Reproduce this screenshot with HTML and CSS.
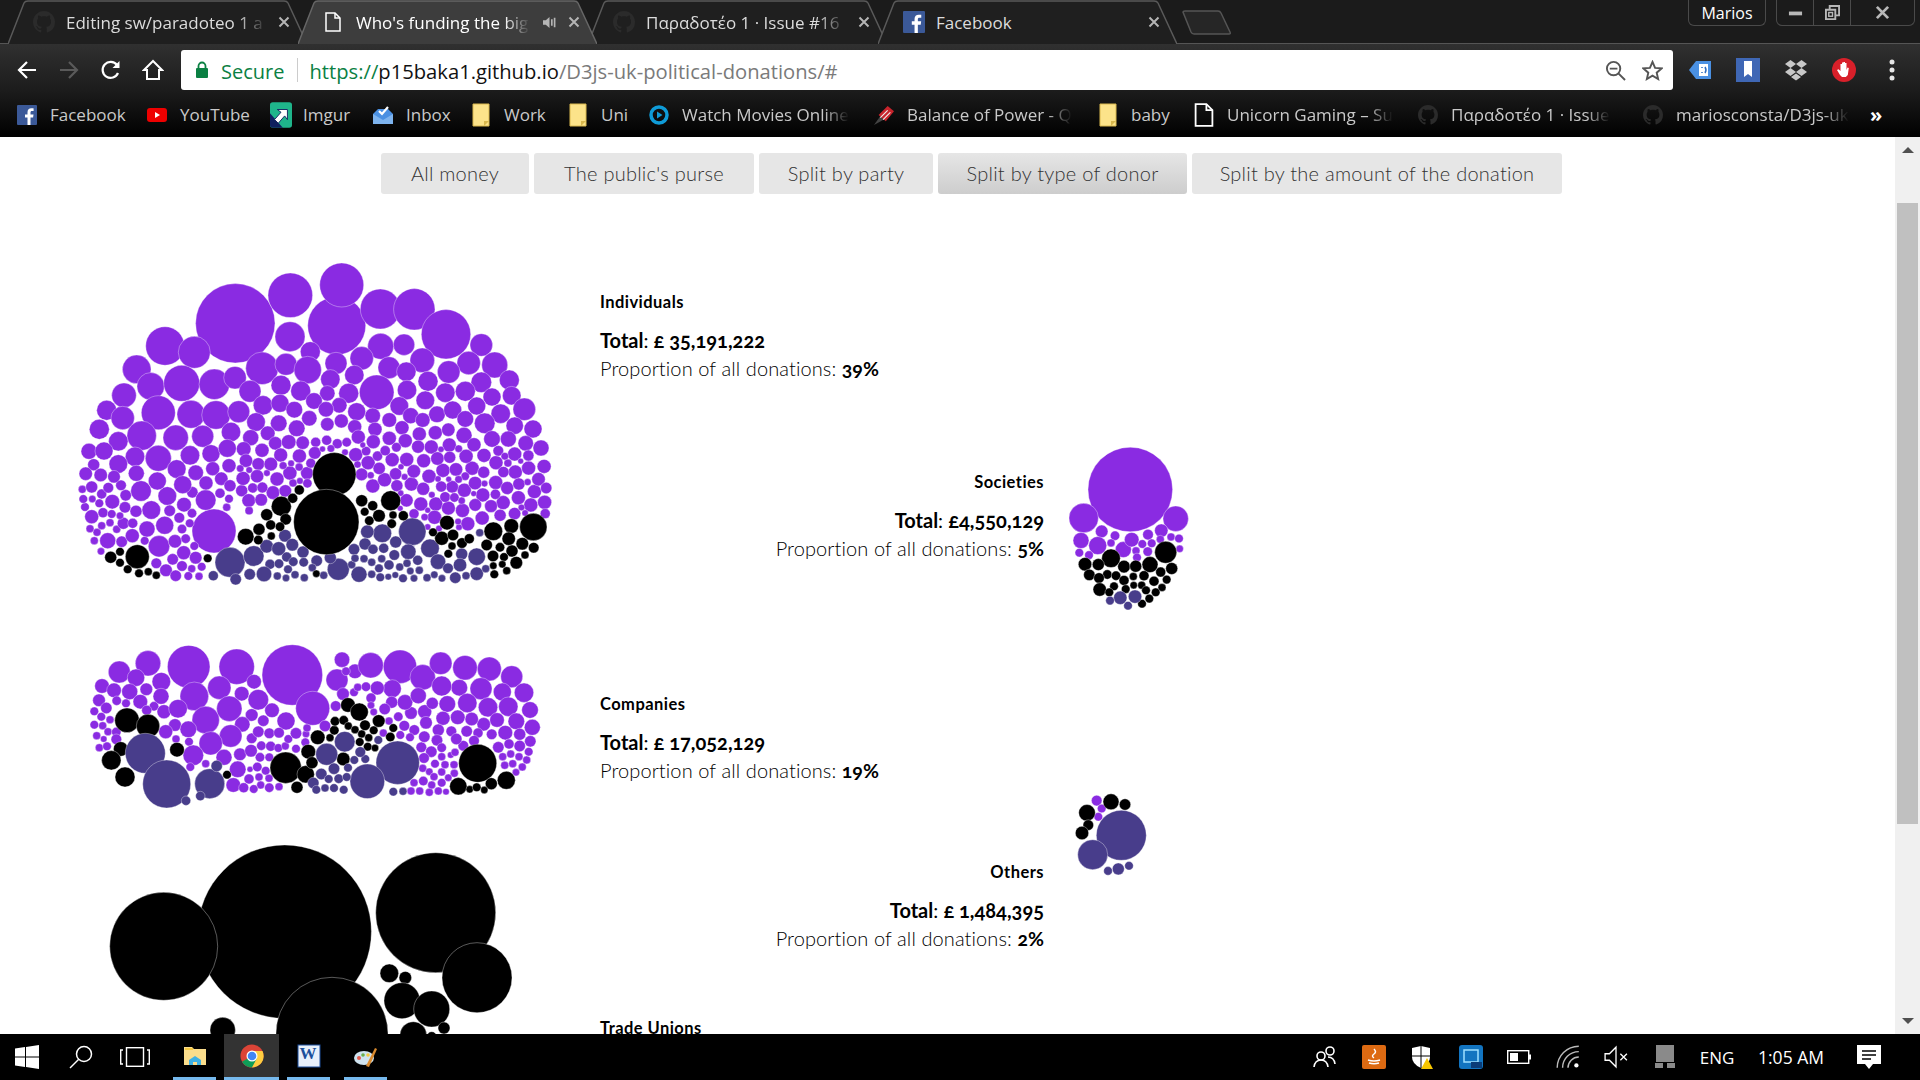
FILE: index.html
```html
<!DOCTYPE html>
<html lang="en">
<head>
<meta charset="utf-8">
<title>Who's funding the big parties</title>
<link rel="stylesheet" href="styles.css">
</head>
<body>
<svg class="sprite" aria-hidden="true">
  <symbol id="gh" viewBox="0 0 16 16"><path d="M8 0C3.58 0 0 3.58 0 8c0 3.54 2.29 6.53 5.47 7.59.4.07.55-.17.55-.38 0-.19-.01-.82-.01-1.49-2.01.37-2.53-.49-2.69-.94-.09-.23-.48-.94-.82-1.13-.28-.15-.68-.52-.01-.53.63-.01 1.08.58 1.23.82.72 1.21 1.87.87 2.33.66.07-.52.28-.87.51-1.07-1.78-.2-3.64-.89-3.64-3.95 0-.87.31-1.59.82-2.15-.08-.2-.36-1.02.08-2.12 0 0 .67-.21 2.2.82.64-.18 1.32-.27 2-.27.68 0 1.36.09 2 .27 1.53-1.04 2.2-.82 2.2-.82.44 1.1.16 1.92.08 2.12.51.56.82 1.27.82 2.15 0 3.07-1.87 3.75-3.65 3.95.29.25.54.73.54 1.48 0 1.07-.01 1.93-.01 2.2 0 .21.15.46.55.38A8.013 8.013 0 0016 8c0-4.42-3.58-8-8-8z" fill="#2b2b2b"/></symbol>
  <symbol id="fb" viewBox="0 0 20 20"><rect width="20" height="20" rx="1" fill="#3b5998"/><path d="M13.5 20v-7.6h2.6l.4-3h-3V7.6c0-.9.3-1.5 1.5-1.5h1.6V3.4c-.3 0-1.200-.1-2.300-.1-2.300 0-3.800 1.400-3.800 3.900v2.200H8v3h2.500V20z" fill="#fff"/></symbol>
  <symbol id="doc" viewBox="0 0 16 20"><path d="M1 1h9l5 5v13H1z" fill="none" stroke="#fff" stroke-width="1.500"/><path d="M10 1v5h5" fill="none" stroke="#fff" stroke-width="1.500"/></symbol>
  <symbol id="folder" viewBox="0 0 18 24"><path d="M1 1h16v22H1z" fill="#fce38a" stroke="#d9b84e"/><path d="M12 23l5-5h-5z" fill="#d9b84e"/></symbol>
  <symbol id="close" viewBox="0 0 12 12"><path d="M1.500 1.500l9 9M10.500 1.500l-9 9" stroke="#b5b5b5" stroke-width="2" fill="none"/></symbol>
</svg>

<header class="tabstrip">
  <div class="tabs">
    <div class="tab">
      <svg class="tab-shape" viewBox="0 0 299 44" preserveAspectRatio="none"><path d="M0 44L16 3Q17 1 20 1H276Q279 1 280 3L299 44"/></svg>
      <svg class="tab-icon"><use href="#gh"/></svg>
      <span class="tab-title">Editing sw/paradoteo 1 a</span>
      <svg class="tab-close"><use href="#close"/></svg>
    </div>
    <div class="tab tab-active">
      <svg class="tab-shape" viewBox="0 0 299 44" preserveAspectRatio="none"><path d="M0 44L16 3Q17 1 20 1H276Q279 1 280 3L299 44"/></svg>
      <svg class="tab-icon tab-icon-doc"><use href="#doc"/></svg>
      <span class="tab-title">Who's funding the big</span>
      <svg class="tab-speaker" viewBox="0 0 16 14"><path d="M1 4.500h3L8 1v12L4 9.500H1z" fill="#b5b5b5"/><path d="M10.500 3.500v7M13.500 2v10" stroke="#b5b5b5" stroke-width="1.800"/></svg>
      <svg class="tab-close"><use href="#close"/></svg>
    </div>
    <div class="tab">
      <svg class="tab-shape" viewBox="0 0 299 44" preserveAspectRatio="none"><path d="M0 44L16 3Q17 1 20 1H276Q279 1 280 3L299 44"/></svg>
      <svg class="tab-icon"><use href="#gh"/></svg>
      <span class="tab-title">Παραδοτέο 1 · Issue #16</span>
      <svg class="tab-close"><use href="#close"/></svg>
    </div>
    <div class="tab">
      <svg class="tab-shape" viewBox="0 0 299 44" preserveAspectRatio="none"><path d="M0 44L16 3Q17 1 20 1H276Q279 1 280 3L299 44"/></svg>
      <svg class="tab-icon"><use href="#fb"/></svg>
      <span class="tab-title tab-title-plain">Facebook</span>
      <svg class="tab-close"><use href="#close"/></svg>
    </div>
    <svg class="newtab" viewBox="0 0 50 25"><path d="M1 2Q1 1 3 1H36Q38 1 39 3L48 22Q49 24 47 24H12Q10 24 9 22z"/></svg>
  </div>
  <div class="window-area">
    <div class="profile">Marios</div>
    <div class="winctl">
      <div class="winbtn"><svg viewBox="0 0 16 16"><rect x="1" y="7" width="14" height="4" fill="#b8b8b8"/></svg></div>
      <div class="winbtn"><svg viewBox="0 0 16 16"><path d="M5 4V1h10v10h-3M1 5h10v10H1z" fill="none" stroke="#b8b8b8" stroke-width="2"/><rect x="4" y="8" width="4" height="4" fill="none" stroke="#b8b8b8" stroke-width="1.500"/></svg></div>
      <div class="winbtn winbtn-close"><svg viewBox="0 0 16 16"><path d="M2 2l12 12M14 2L2 14" stroke="#b8b8b8" stroke-width="3"/></svg></div>
    </div>
  </div>
</header>

<div class="lower">
  <nav class="toolbar">
    <div class="navbtn"><svg viewBox="0 0 22 22"><path d="M20 11H3M11 3l-8 8 8 8" fill="none" stroke="#fff" stroke-width="2.200"/></svg></div>
    <div class="navbtn"><svg viewBox="0 0 22 22"><path d="M2 11h17M11 3l8 8-8 8" fill="none" stroke="#5a5a5a" stroke-width="2.200"/></svg></div>
    <div class="navbtn"><svg viewBox="0 0 22 22"><path d="M18 14a8 8 0 1 1-1-8" fill="none" stroke="#fff" stroke-width="2.200"/><path d="M19.500 2v7h-7z" fill="#fff"/></svg></div>
    <div class="navbtn"><svg viewBox="0 0 22 22"><path d="M11 2L2 11h3v9h12v-9h3z" fill="none" stroke="#fff" stroke-width="2"/></svg></div>
    <div class="omnibox">
      <svg class="lock" viewBox="0 0 14 18"><path d="M3.500 8V5a3.500 3.500 0 0 1 7 0v3" fill="none" stroke="#0b8043" stroke-width="1.800"/><rect x="1" y="7" width="12" height="10" rx="1" fill="#0b8043"/></svg>
      <span class="secure">Secure</span>
      <span class="omni-sep"></span>
      <span class="url"><span class="url-scheme">https://</span><span class="url-host">p15baka1.github.io</span>/D3js-uk-political-donations/#</span>
      <svg class="omni-icon" viewBox="0 0 22 22"><circle cx="9" cy="9" r="7" fill="none" stroke="#555" stroke-width="2"/><path d="M5 9h8M14 14l7 7" stroke="#555" stroke-width="2"/></svg>
      <svg class="omni-icon" viewBox="0 0 22 22"><path d="M11 2l2.700 6.200 6.800.6-5.100 4.500 1.500 6.600L11 16.400l-5.900 3.500 1.500-6.600L1.500 8.800l6.800-.6z" fill="none" stroke="#555" stroke-width="2"/></svg>
    </div>
    <div class="extensions">
      <div class="ext"><svg viewBox="0 0 24 22"><path d="M8 2h15v18H8l-7-9z" fill="#4a90e2"/><rect x="11" y="5" width="9" height="12" fill="#fff"/><path d="M14 8v1M14 13v1M17 8q2 3 0 6" stroke="#2d6cc0" stroke-width="1.500" fill="none"/></svg></div>
      <div class="ext"><svg viewBox="0 0 24 24"><rect width="24" height="24" fill="#3f67b5"/><path d="M8 3h8v16l-4-3-4 3z" fill="#fff"/></svg></div>
      <div class="ext"><svg viewBox="0 0 24 22"><path d="M6.500 1L12 5 6.500 9 1 5zM17.500 1L23 5l-5.500 4L12 5zM6.500 9L12 13l-5.500 4L1 13zM17.500 9L23 13l-5.500 4L12 13zM12 14.500l5 3.500-5 3.500L7 18z" fill="#c8c8c8"/></svg></div>
      <div class="ext"><svg viewBox="0 0 24 24"><ellipse cx="12" cy="12" rx="12" ry="12" fill="#d8202a"/><path d="M8 17l-3-5 1.500-.8L8.500 13V6h1.500v5V4.500h1.500V11V4h1.500v7V5h1.500v7l1-2.500 1.300.5-1 7-2 2H10z" fill="#fff"/></svg></div>
      <div class="ext"><svg viewBox="0 0 6 24"><circle cx="3" cy="4" r="2.500" fill="#e6e6e6"/><circle cx="3" cy="12" r="2.500" fill="#e6e6e6"/><circle cx="3" cy="20" r="2.500" fill="#e6e6e6"/></svg></div>
    </div>
  </nav>
  <nav class="bookmarks">
    <a class="bm"><svg class="bm-icon"><use href="#fb"/></svg><span>Facebook</span></a>
    <a class="bm"><svg class="bm-icon" viewBox="0 0 20 20"><rect y="3" width="20" height="14" rx="3" fill="#e00"/><path d="M8 7l5 3-5 3z" fill="#fff"/></svg><span>YouTube</span></a>
    <a class="bm"><svg class="bm-icon bm-icon-tall" viewBox="0 0 24 28"><rect width="24" height="28" rx="3" fill="#1fb58b"/><path d="M0 12L14 28H3q-3 0-3-3z" fill="#0f1f5e"/><path d="M5 19l7-8-4-3h11v11l-3-4-7 8z" fill="#fff" stroke="#0f1f5e" stroke-width="1"/></svg><span>Imgur</span></a>
    <a class="bm"><svg class="bm-icon" viewBox="0 0 20 20"><path d="M0 9l5-5h10l5 5v10H0z" fill="#4a90e2"/><path d="M0 9l10 6 10-6v10H0z" fill="#7db3ee"/><path d="M6 6l3 3 6-7" fill="none" stroke="#fff" stroke-width="2.200"/></svg><span>Inbox</span></a>
    <a class="bm"><svg class="bm-icon"><use href="#folder"/></svg><span>Work</span></a>
    <a class="bm"><svg class="bm-icon"><use href="#folder"/></svg><span>Uni</span></a>
    <a class="bm bm-long"><svg class="bm-icon" viewBox="0 0 20 20"><circle cx="10" cy="10" r="8" fill="none" stroke="#0f9bd7" stroke-width="3.500"/><path d="M8 6.500l5.500 3.500L8 13.500z" fill="#0f9bd7"/></svg><span>Watch Movies Online</span></a>
    <a class="bm bm-long"><svg class="bm-icon" viewBox="0 0 22 22"><path d="M0 22l7-10 4 4z" fill="#444"/><path d="M5 11L15 1l7 6-9 11z" fill="#c8242c"/><path d="M7 14l8-8M10 16l8-8" stroke="#eee" stroke-width="1.200"/></svg><span>Balance of Power - Q</span></a>
    <a class="bm"><svg class="bm-icon"><use href="#folder"/></svg><span>baby</span></a>
    <a class="bm bm-long"><svg class="bm-icon"><use href="#doc"/></svg><span>Unicorn Gaming – Su</span></a>
    <a class="bm bm-long"><svg class="bm-icon"><use href="#gh"/></svg><span>Παραδοτέο 1 · Issue</span></a>
    <a class="bm bm-long"><svg class="bm-icon"><use href="#gh"/></svg><span>mariosconsta/D3js-uk</span></a>
    <span class="bm-more">»</span>
  </nav>
</div>

<main class="page">
  <div class="content">
    <div class="filters">
      <button class="filter">All money</button>
      <button class="filter">The public's purse</button>
      <button class="filter">Split by party</button>
      <button class="filter filter-active">Split by type of donor</button>
      <button class="filter">Split by the amount of the donation</button>
    </div>
    <svg id="bubbles" class="bubbles" viewBox="0 137 1895 897"></svg>
    <div class="labels">
      <section class="label"><h3>Individuals</h3><p class="total"><b>Total</b>: <b>£ 35,191,222</b></p><p class="share">Proportion of all donations: <b>39%</b></p></section>
      <section class="label label-right label-societies"><h3>Societies</h3><p class="total"><b>Total</b>: <b>£4,550,129</b></p><p class="share">Proportion of all donations: <b>5%</b></p></section>
      <section class="label label-companies"><h3>Companies</h3><p class="total"><b>Total</b>: <b>£ 17,052,129</b></p><p class="share">Proportion of all donations: <b>19%</b></p></section>
      <section class="label label-right label-others"><h3>Others</h3><p class="total"><b>Total</b>: <b>£ 1,484,395</b></p><p class="share">Proportion of all donations: <b>2%</b></p></section>
      <section class="label label-unions"><h3>Trade Unions</h3></section>
    </div>
  </div>
  <div class="scrollbar">
    <div class="sb-btn"><span class="arrow-up"></span></div>
    <div class="sb-thumb"></div>
    <div class="sb-btn sb-btn-end"><span class="arrow-down"></span></div>
  </div>
</main>

<footer class="taskbar">
  <div class="task-left">
    <div class="tb tb-start"><svg viewBox="0 0 24 24"><path d="M0 3.500l10-1.400v9.400H0zM11 2l13-2v11.500H11zM0 12.500h10v9.400L0 20.500zM11 12.500h13V24l-13-2z" fill="#fff"/></svg></div>
    <div class="tb tb-search"><svg viewBox="0 0 24 24"><circle cx="15" cy="9" r="7.500" fill="none" stroke="#fff" stroke-width="1.500"/><path d="M9.500 14.500L1 23" stroke="#fff" stroke-width="1.500"/></svg></div>
    <div class="tb tb-view"><svg viewBox="0 0 30 20"><rect x="6.500" y=".7" width="17" height="18.600" fill="none" stroke="#fff" stroke-width="1.400"/><path d="M3 3H.7v14H3M27 3h2.300v14H27" fill="none" stroke="#fff" stroke-width="1.400"/></svg></div>
    <div class="tb tb-app tb-explorer"><svg viewBox="0 0 24 20"><path d="M1 1h8l2 2h12v16H1z" fill="#fbdd8c"/><rect x="2" y="2" width="8" height="2" fill="#f5c842"/><path d="M6 19v-5l6-4 6 4v5h-4v-3h-4v3z" fill="#3fb1e5"/></svg></div>
    <div class="tb tb-app tb-chrome"><svg viewBox="0 0 24 24"><circle cx="12" cy="12" r="11.500" fill="#db4437"/><path d="M12 12L2 17.800A11.500 11.500 0 0 0 12 23.500L18 14z" fill="#0f9d58"/><path d="M12 7h10.500A11.500 11.500 0 0 1 12 23.500L17 14z" fill="#ffcd40"/><circle cx="12" cy="12" r="5.500" fill="#fff"/><circle cx="12" cy="12" r="4.300" fill="#4285f4"/></svg></div>
    <div class="tb tb-app tb-word"><svg viewBox="0 0 24 24"><rect x="1" y="1" width="22" height="22" fill="#e8f0fb" stroke="#1c4f9c"/><text x="11" y="15" class="word-w">W</text></svg></div>
    <div class="tb tb-app tb-paint"><svg viewBox="0 0 24 24"><ellipse cx="10" cy="14" rx="10" ry="7" fill="#cfe3ef"/><circle cx="5" cy="14" r="2" fill="#e25b4d"/><circle cx="9" cy="11" r="1.800" fill="#6ab04c"/><circle cx="14" cy="11" r="1.800" fill="#f4c842"/><path d="M12 22L21 4l2 1-8 18z" fill="#d98a2e"/></svg></div>
  </div>
  <div class="task-right">
    <div class="tray"><svg viewBox="0 0 24 24"><circle cx="17" cy="6" r="4" fill="none" stroke="#fff" stroke-width="1.600"/><circle cx="8" cy="11" r="4" fill="none" stroke="#fff" stroke-width="1.600"/><path d="M1 22q1-7 7-7t7 7M15 12q6 0 7 7" fill="none" stroke="#fff" stroke-width="1.600"/></svg></div>
    <div class="tray"><svg viewBox="0 0 24 24"><rect width="24" height="24" rx="2" fill="#dd6a12"/><path d="M6 15q6 2 12 0M7 18q5 1.500 10 0M12 4q3 3 0 5t0 4" fill="none" stroke="#fff" stroke-width="1.500"/></svg></div>
    <div class="tray"><svg viewBox="0 0 24 24"><path d="M2 3l9-2 9 2v9q0 7-9 11-9-4-9-11z" fill="#fff"/><path d="M11 1v22M2 11h18" stroke="#000"/><path d="M17 13l6 11H11z" fill="#f7c600"/></svg></div>
    <div class="tray"><svg viewBox="0 0 24 24"><rect width="24" height="24" rx="3" fill="#1274c0"/><rect x="5" y="5" width="14" height="12" fill="none" stroke="#9fe0ff" stroke-width="1.500"/><rect x="12" y="17" width="11" height="6" fill="#0a3c78"/></svg></div>
    <div class="tray"><svg viewBox="0 0 24 14"><rect x=".7" y=".7" width="21" height="12.600" fill="none" stroke="#fff" stroke-width="1.400"/><rect x="3" y="3" width="8" height="8" fill="#fff"/><rect x="22" y="4.500" width="2" height="5" fill="#fff"/></svg></div>
    <div class="tray"><svg viewBox="0 0 20 20"><path d="M1 19a18 18 0 0 1 18-18M5.500 19A13.500 13.500 0 0 1 19 5.500M10 19a9 9 0 0 1 9-9" fill="none" stroke="#bbb" stroke-width="1.200"/><circle cx="17" cy="17" r="1.800" fill="#fff"/></svg></div>
    <div class="tray"><svg viewBox="0 0 22 20"><path d="M1 7h4l6-6v18l-6-6H1z" fill="none" stroke="#fff" stroke-width="1.200"/><path d="M15 7l6 6M21 7l-6 6" stroke="#fff" stroke-width="1.200"/></svg></div>
    <div class="tray"><svg viewBox="0 0 20 24"><rect x="1" width="18" height="17" fill="#8a8a8a"/><rect y="18" width="8" height="5" fill="#8a8a8a"/><rect x="12" y="18" width="8" height="5" fill="#8a8a8a"/></svg></div>
    <div class="tray-text tray-lang">ENG</div>
    <div class="tray-text tray-clock">1:05 AM</div>
    <div class="tray tray-note"><svg viewBox="0 0 24 24"><path d="M0 0h24v19h-8l-4 5-4-5H0z" fill="#fff"/><path d="M5 6h14M5 10h14M5 14h9" stroke="#000" stroke-width="1.300"/></svg></div>
  </div>
</footer>
<script src="bubbles.js"></script>
</body>
</html>
```

FILE: styles.css
```css
* { box-sizing: border-box; }
html, body { margin: 0; height: 100%; }
body {
  display: flex;
  flex-direction: column;
  width: 1920px;
  height: 1080px;
  overflow: hidden;
  background: #000;
  font-family: "Open Sans", "Noto Sans", sans-serif;
}
.sprite { display: none; }

/* tab strip */
.tabstrip {
  display: flex;
  justify-content: space-between;
  height: 44px;
  background: #1b1b1b;
  border-bottom: 1px solid #555;
}
.tabs { display: flex; padding-left: 8px; }
.tab {
  position: relative;
  display: flex;
  align-items: center;
  width: 299px;
  height: 44px;
  margin-right: -9px;
  padding: 1px 16px 1px 25px;
  color: #dcdcdc;
  font-size: 17px;
}
.tab-shape { position: absolute; inset: 0; width: 100%; height: 100%; }
.tab-shape path { fill: #1f1f1f; stroke: #5a5a5a; stroke-width: 1.500; }
.tab-active { z-index: 2; color: #fff; }
.tab-active .tab-shape path { fill: #3d3d3d; stroke: #666; }
.tab-icon { position: relative; flex: none; width: 22px; height: 22px; margin-right: 11px; }
.tab-icon-doc { width: 16px; height: 20px; margin: 0 15px 0 2px; }
.tab-title {
  position: relative;
  flex: 1;
  min-width: 0;
  overflow: hidden;
  white-space: nowrap;
  -webkit-mask-image: linear-gradient(to right, #000 85%, transparent);
  mask-image: linear-gradient(to right, #000 85%, transparent);
}
.tab-title-plain { -webkit-mask-image: none; mask-image: none; }
.tab-speaker { position: relative; flex: none; width: 15px; height: 13px; margin-left: 12px; }
.tab-close { position: relative; flex: none; width: 12px; height: 12px; margin-left: 11px; margin-right: 1px; }
.newtab { width: 50px; height: 25px; margin: 10px 0 0 14px; }
.newtab path { fill: #262626; stroke: #555; stroke-width: 1.500; }

.window-area { display: flex; align-items: flex-start; padding-right: 5px; }
.profile {
  width: 78px;
  height: 26px;
  margin-right: 10px;
  border: 1px solid #4a4a4a;
  border-top: 0;
  border-radius: 0 0 6px 6px;
  color: #fff;
  font-size: 16px;
  line-height: 26px;
  text-align: center;
}
.winctl {
  display: flex;
  width: 139px;
  height: 26px;
  border: 1px solid #4a4a4a;
  border-top: 0;
  border-radius: 0 0 6px 6px;
}
.winbtn {
  display: flex;
  align-items: center;
  justify-content: center;
  width: 37px;
  border-right: 1px solid #4a4a4a;
}
.winbtn svg { width: 15px; height: 15px; }
.winbtn-close { flex: 1; border-right: 0; }

/* toolbar + bookmarks */
.lower { background: linear-gradient(#303030, #1c1c1c 50%, #000); }
.toolbar { display: flex; align-items: center; height: 50px; padding: 5px 0 3px 6px; }
.navbtn { display: flex; align-items: center; justify-content: center; width: 42px; }
.navbtn svg { width: 22px; height: 22px; }
.omnibox {
  display: flex;
  align-items: center;
  width: 1492px;
  height: 40px;
  margin-left: 7px;
  padding: 0 10px 0 14px;
  border-radius: 3px;
  background: #fff;
  color: #7a7a7a;
  font-size: 20.200px;
}
.lock { width: 14px; height: 18px; margin-right: 12px; }
.secure { padding-top: 2px; color: #0b8043; font-size: 20px; }
.omni-sep { width: 1px; height: 24px; margin: 0 11px 0 13px; background: #ccc; }
.url { flex: 1; padding-top: 2px; white-space: nowrap; }
.url-scheme { color: #0b8043; }
.url-host { color: #111; }
.omni-icon { width: 21px; height: 21px; margin-left: 16px; }
.extensions { display: flex; margin-left: 3px; }
.ext { display: flex; align-items: center; justify-content: center; width: 48px; }
.ext svg { width: 24px; height: 24px; }

.bookmarks {
  display: grid;
  grid-template-columns: 130px 123px 103px 98px 97px 81px 225px 224px 96px 224px 225px 227px auto;
  align-items: center;
  height: 43px;
  padding: 0 0 2px 17px;
  color: #c9c9c9;
  font-size: 17px;
}
.bm { display: flex; align-items: center; gap: 13px; min-width: 0; padding-right: 12px; white-space: nowrap; }
.bm-icon { flex: none; width: 20px; height: 24px; }
.bm-icon-tall { width: 22px; height: 26px; margin-right: -2px; }
.bm-long span {
  -webkit-mask-image: linear-gradient(to right, #000 85%, transparent);
  mask-image: linear-gradient(to right, #000 85%, transparent);
}
.bm-more { color: #fff; font-weight: 700; font-size: 20px; }

/* page */
.page { display: flex; flex: 1; min-height: 0; background: #fff; }
.content { position: relative; flex: 1; overflow: hidden; }
.filters {
  position: relative;
  z-index: 1;
  display: grid;
  grid-template-columns: 148px 220px 174px 249px 370px;
  gap: 5px;
  padding: 16px 0 0 381px;
}
.filter {
  height: 41px;
  padding: 0 0 2px;
  border: 0;
  border-radius: 3px;
  background: #e6e6e6;
  color: #333;
  font: 300 20px "Lato", sans-serif;
  letter-spacing: .25px;
}
.filter-active { background: linear-gradient(#e6e6e6, #cdcdcd); }
.bubbles { position: absolute; top: 0; left: 0; width: 1895px; height: 897px; }
.bubbles circle { stroke: #fff; stroke-width: .5; stroke-opacity: .7; }
.labels {
  position: relative;
  display: flex;
  flex-direction: column;
  width: 444px;
  margin: 96px 0 0 600px;
  font-family: "Lato", sans-serif;
  color: #000;
}
.label { height: 93px; }
.label h3 { margin: 0; font-size: 16.500px; font-weight: 700; line-height: 24px; letter-spacing: .45px; }
.total { margin: 12px 0 0; font-size: 20px; line-height: 28px; font-weight: 400; font-variant-numeric: oldstyle-nums; }
.total b { font-weight: 700; }
.share { margin: 0; font-size: 20px; line-height: 28px; font-weight: 300; font-variant-numeric: oldstyle-nums; letter-spacing: .1px; }
.share b { font-size: 19.500px; font-weight: 700; letter-spacing: 0; }
.label-right { text-align: right; }
.label-societies { margin-top: 87px; }
.label-companies { margin-top: 129px; }
.label-others { margin-top: 75px; }
.label-unions { margin-top: 63px; }

.scrollbar { display: flex; flex-direction: column; flex: none; width: 25px; background: #f0f0f0; }
.sb-btn { display: flex; align-items: center; justify-content: center; height: 26px; }
.sb-btn-end { margin-top: auto; }
.arrow-up { border: 6px solid transparent; border-top: 0; border-bottom: 6px solid #505050; }
.arrow-down { border: 6px solid transparent; border-bottom: 0; border-top: 6px solid #505050; }
.sb-thumb { height: 621px; margin: 40px 2px 0; background: #c0c0c0; }

/* taskbar */
.taskbar {
  display: flex;
  justify-content: space-between;
  flex: none;
  height: 46px;
  background: #000;
  color: #fff;
  font-size: 17px;
}
.task-left { display: flex; }
.tb { display: flex; align-items: center; justify-content: center; height: 46px; }
.tb svg { width: 24px; height: 24px; }
.tb-start { width: 54px; }
.tb-search { width: 54px; }
.tb-view { width: 54px; margin-right: 11px; }
.tb-view svg { width: 30px; height: 20px; }
.tb-app { width: 43px; border-bottom: 3px solid #76b9ed; }
.tb-chrome { width: 55px; margin: 0 8px; background: #333; }
.tb-word { margin-right: 14px; }
.word-w { fill: #1c4f9c; font: 700 17px "Liberation Serif", serif; text-anchor: middle; }
.task-right { display: flex; align-items: center; padding-right: 20px; }
.tray { display: flex; align-items: center; justify-content: center; width: 48.500px; }
.tray svg { width: 24px; height: 24px; }
.tray-text { white-space: nowrap; }
.tray-lang { width: 52px; margin-left: 2px; text-align: center; }
.tray-clock { width: 94px; margin-left: 1px; font-size: 17.500px; text-align: center; }
.tray-note { width: 62px; }
```

FILE: bubbles.js
```js
(function () {
  var P = '#8a2be2', N = '#483d8b', K = '#000';
  var svg = document.getElementById('bubbles');

  function parse(s) {
    return s.split(';').map(function (t) { return t.trim().split(',').map(Number); })
      .filter(function (a) { return a.length === 3 && !isNaN(a[2]); });
  }

  // ox, oy: origin of the sketch; sx, sy: sketch units per page pixel
  function place(list, o) {
    return parse(list).map(function (c) {
      return { x: o.ox + c[0] / o.sx, y: o.oy + c[1] / o.sy, r: c[2] / o.sx };
    });
  }

  function draw(items, fill) {
    items.forEach(function (c) {
      var e = document.createElementNS('http://www.w3.org/2000/svg', 'circle');
      e.setAttribute('cx', c.x.toFixed(1));
      e.setAttribute('cy', c.y.toFixed(1));
      e.setAttribute('r', c.r.toFixed(1));
      e.setAttribute('fill', c.fill || fill);
      svg.appendChild(e);
    });
  }

  function inside(poly, x, y) {
    var hit = false;
    for (var i = 0, j = poly.length - 1; i < poly.length; j = i++) {
      var a = poly[i], b = poly[j];
      if ((a[1] > y) !== (b[1] > y) && x < (b[0] - a[0]) * (y - a[1]) / (b[1] - a[1]) + a[0]) hit = !hit;
    }
    return hit;
  }

  /* ---------- Individuals ---------- */
  var A = { ox: 60, oy: 250, sx: 3, sy: 3 };
  var aPurple = place('526,220,119;691,136,67;830,227,87;845,105,66;961,177,60;1063,178,62;1158,253,74;690,260,45;315,288,58;403,307,48;751,305,30;1264,285,34;1032,284,32;962,289,39;230,358,43;606,355,49;678,343,33;743,360,41;828,340,33;905,325,35;987,353,33;1087,331,37;1226,339,35;1304,345,39;1166,366,34;1039,365,29;883,375,29;811,388,29;1104,394,30;1264,397,31;1348,390,30;272,409,41;365,400,54;463,403,46;525,383,34;950,427,52;192,436,37;570,424,33;663,406,30;722,423,30;802,430,23;866,430,30;1041,420,29;1156,428,29;1216,424,30;1296,441,27;1355,437,28;1096,451,28;140,481,30;188,504,35;295,488,51;393,493,42;468,495,43;536,485,33;609,466,29;660,460,27;703,479,25;762,453,25;838,466,23;798,478,23;890,485,27;1018,468,28;1052,497,24;1131,493,25;1178,480,27;1250,468,27;1322,491,29;1393,478,34;118,538,30;245,557,44;347,563,38;428,559,33;513,546,29;588,516,28;656,520,25;748,505,23;938,497,23;988,510,22;1088,510,22;1216,507,25;1274,520,31;1364,527,26;1419,537,27;175,574,29;572,563,24;623,550,22;710,535,25;802,523,20;844,513,21;884,530,21;945,538,21;1026,533,21;1078,552,21;1126,548,21;1165,539,20;1212,556,24;1296,567,25;1345,567,24;87,604,24;132,603,27;225,620,29;295,625,39;390,616,29;453,611,27;502,595,27;551,597,22;606,601,21;646,580,20;686,576,22;728,578,20;767,577,15;800,571,15;832,581,15;860,577,14;895,561,21;940,575,21;988,565,21;1036,572,21;1114,591,21;1168,585,21;1242,584,21;1397,580,23;1443,594,24;175,642,28;101,644,18;350,657,28;407,668,23;458,656,21;507,647,21;558,632,20;595,642,19;462,843,66;297,889,32;143,872,24;185,875,17;254,872,13;217,857,21;261,837,24;314,826,27;345,874,20;377,866,14;403,888,13;366,837,14;389,820,13;371,908,21;407,923,19;338,928,17;289,940,16;366,948,16;395,956,12;425,950,13;318,961,19;347,977,17;385,978,13;417,979,12;123,904,11;103,872,12;111,847,12;90,836,12;125,827,12;150,818,12;170,838,12;190,820,18;218,820,15;95,800,21;129,788,15;155,792,13;180,797,11;75,771,13;97,747,11;70,747,13;67,718,12;95,711,18;125,732,15;118,760,13;157,755,22;145,713,16;195,772,17;228,784,18;197,736,17;183,706,16;162,680,19;122,675,20;77,671,20;243,723,31;274,780,28;322,738,28;329,782,17;372,764,22;397,727,17;437,750,31;396,790,14;358,803,16;480,730,15;292,693,27;229,670,24;368,704,27;438,699,21;484,686,20;510,707,18;500,772,12;507,746,13;545,722,18;578,714,15', A);
  var aNavy = place('510,937,45;1057,845,41;967,850,28;922,845,20;581,918,31;835,958,33;897,973,24;811,923,18;882,898,17;915,882,18;939,898,15;971,895,15;1007,876,18;1003,915,16;1045,905,23;1110,895,28;1134,935,23;1073,931,15;1205,912,18;1250,920,26;1200,945,20;1164,955,16;1186,983,17;1250,971,20;1218,977,12;1277,956,12;1259,848,12;675,857,19;620,889,20;656,896,21;697,884,19;729,906,18;680,921,15;630,943,15;657,941,14;700,935,14;731,937,14;770,932,17;684,958,13;757,953,12;612,972,23;569,973,17;652,978,12;678,984,11;705,974,12;733,983,12;791,976,12;527,988,17;460,977,15;875,944,12;912,926,12;885,925,12;935,937,12;965,926,12;987,945,15;1019,951,12;1041,940,12;957,955,13;935,973,12;961,982,13;985,980,10;1006,975,10;1029,985,13;1051,963,11;1078,961,12;1062,985,11;1101,983,12;1123,974,11;1146,985,11', A);
  var aBlack = place('823,673,65;799,816,98;992,752,30;232,920,36;1420,831,41;1300,844,28;1161,818,22;1354,828,22;664,769,30;677,808,17;620,794,18;557,860,25;597,838,18;905,752,18;938,767,15;957,797,19;1030,797,15;999,795,12;995,821,14;718,720,15;698,745,15;914,785,13;928,812,14;632,825,15;660,830,14;634,858,12;595,870,14;1145,865,21;1179,855,17;1119,847,13;1176,888,12;1165,911,13;1206,879,16;1228,866,15;1280,885,17;1346,866,20;1387,881,19;1320,892,14;1356,903,18;1421,893,16;1299,918,17;1395,915,12;1369,938,19;1332,921,13;1327,943,11;1300,947,11;1340,962,12;1303,973,13;152,922,18;180,905,13;180,938,13;203,958,13;237,970,13;265,965,12;289,976,12;443,925,13;769,971,11', A);

  // the many small purple circles of the lower right are packed from a seeded sweep
  var outline = [[560,560],[1450,580],[1460,680],[1458,790],[1440,800],[1300,820],[1100,850],[1010,780],[900,680],[760,700],[560,790],[520,700]];
  var taken = aPurple.concat(aNavy, aBlack);
  var seed = 20;
  function rnd() { seed = (seed * 16807) % 2147483647; return seed / 2147483647; }
  var filled = [];
  [21, 18, 16, 14, 12, 10].forEach(function (cap) {
    for (var n = 0; n < 2500; n++) {
      var zx = 520 + rnd() * 960, zy = 540 + rnd() * 320;
      if (!inside(outline, zx, zy)) continue;
      var x = A.ox + zx / 3, y = A.oy + zy / 3, r = cap / 3;
      taken.concat(filled).forEach(function (c) {
        r = Math.min(r, Math.hypot(c.x - x, c.y - y) - c.r + 0.7);
      });
      if (r >= cap / 3 * 0.85) filled.push({ x: x, y: y, r: r });
    }
  });
  draw(aPurple, P);
  draw(filled, P);
  draw(aNavy, N);
  draw(aBlack, K);

  /* ---------- Companies and Trade Unions ---------- */
  var B = { ox: 60, oy: 630, sx: 3, sy: 3 };
  draw(place('697,135,91;386,110,64;530,110,53;264,100,38;178,126,33;228,143,26;304,155,28;403,199,43;478,173,35;582,155,22;545,191,22;595,209,31;758,235,51;846,89,23;831,150,33;885,124,22;932,106,38;1020,110,50;1088,142,38;1142,100,34;1215,113,37;1288,117,36;1355,140,33;1392,188,29;1327,186,27;1263,176,33;1198,173,25;1145,168,30;1162,222,25;1222,219,29;1284,232,29;1345,230,29;1410,240,25;1417,292,24;1369,274,25;1311,270,22;1271,283,20;1235,267,20;1193,262,22;1149,265,21;1135,300,18;1174,304,16;1220,304,17;1254,309,15;1295,313,16;1336,308,22;1379,313,18;1411,334,17;1379,348,17;1347,342,15;1315,352,17;1242,332,16;1210,347,16;1189,327,17;1131,331,17;1145,353,14;1084,352,16;1114,365,17;1093,320,17;1063,300,16;1033,287,16;1015,260,14;1053,249,19;1094,245,21;1098,278,19;1117,220,18;1035,217,23;1075,197,24;997,176,27;952,174,21;918,170,14;995,217,18;974,237,17;987,273,12;1021,315,13;1050,322,13;970,309,12;933,204,15;933,226,11;941,246,11;827,228,16;849,192,19;882,187,13;893,172,12;858,124,13;117,211,19;126,168,22;162,181,22;209,185,24;259,178,19;303,199,24;241,215,22;170,212,14;198,220,13;139,234,17;103,244,13;124,260,13;150,269,12;103,284,13;128,287,12;144,305,12;169,306,14;110,317,12;131,327,10;169,328,16;118,353,12;141,349,13;282,229,14;260,241,15;312,245,21;354,236,28;437,270,41;508,236,38;575,255,19;636,241,22;610,272,17;678,273,27;547,283,23;512,318,34;452,340,35;345,285,19;317,305,21;385,298,25;348,327,12;387,335,13;400,376,31;492,382,24;540,373,19;437,401,12;391,411,13;533,418,25;570,418,9;592,411,14;617,422,13;567,447,15;597,441,12;627,445,12;602,465,12;628,473,14;657,470,12;520,465,22;551,473,15;581,477,13;575,325,16;595,305,17;628,310,16;657,308,16;604,347,14;632,349,15;655,354,13;676,348,12;685,327,13;708,310,17;738,312,11;741,294,12;708,356,13;736,337,13;573,362,19;600,382,14;628,382,13;795,288,17;1092,384,16;1125,401,13;1088,415,12;1108,425,11;1122,440,12;1145,426,12;1155,404,12;1182,404,12;1183,430,12;1165,443,11;1145,380,12;1172,375,10;1185,367,12;1145,458,13;1115,465,12;1090,453,14;1062,458,12;1053,483,12;1079,483,12;1108,487,12;1135,483,12;1158,485,10;1328,380,12;1352,372,12;1377,380,12;1400,390,12;1387,411,12;1358,401,12;1334,406,12;1368,427,11;1406,365,13', B), P);
  draw(place('201,271,37;264,288,35;182,357,22;154,391,29;195,441,30;351,359,22;501,434,13;677,413,47;737,433,26;745,365,22;756,398,18;711,472,18;773,322,22;810,323,12;823,301,14;825,274,14;851,271,14;864,225,22;898,246,27;865,288,12;885,299,12;915,286,16;956,273,19;941,301,13;905,312,12;899,336,13;926,323,12;923,350,13;945,354,11;1000,294,13;991,321,14;850,387,20;1253,400,57;1339,451,27;1294,461,18;1195,469,26;1229,478,11;1250,472,13;1273,480,11', B), K);
  draw(place('256,370,60;320,462,72;449,461,45;470,408,17;421,498,14;378,512,14;1013,398,65;922,454,52;854,335,31;800,373,33;822,416,17;864,413,13;784,432,17;806,447,13;836,446,14;860,441,13;760,459,17;769,479,13;795,474,12;822,474,13;851,479,13;883,390,13;916,387,13;901,366,16;955,330,13;1000,485,13;1029,484,12', B), N);
  draw(place('674,905,260;1127,848,180;311,949,162;1251,1043,105;816,1210,168;988,1030,28;1036,1043,19;1026,1112,54;1115,1137,54;1152,1194,18;1060,1215,40;1115,1220,15;488,1200,38', B), K);

  /* ---------- Societies and Others ---------- */
  var C = { ox: 740, oy: 431, sx: 3, sy: 2.53 };
  draw(place('1171,148,127;1031,220,44;1307,222,38;1023,277,24;1085,254,19;1125,265,14;1073,290,27;1018,308,13;1047,314,13;1113,283,12;1150,300,24;1175,275,22;1224,262,16;1264,252,20;1207,286,13;1235,284,13;1261,274,12;1293,268,12;1317,272,13;1319,298,11;1188,303,12;1223,305,14;1191,320,13;1070,935,16;1085,955,13;1075,976,13', C), P);
  draw(place('1277,307,33;1113,322,28;1035,337,20;1075,338,18;1230,338,24;1152,343,19;1187,342,18;1295,348,18;1262,357,15;1048,364,17;1102,363,14;1128,366,14;1180,368,12;1212,366,15;1242,380,15;1280,376,13;1077,372,16;1152,378,15;1122,393,13;1181,390,11;1205,390,12;1266,396,12;1157,400,13;1079,401,20;1108,408,13;1218,403,13;1247,408,13;1228,424,13;1206,437,13;1113,938,24;1155,945,17;1041,966,25;1045,997,16;1026,1017,20', C), K);
  draw(place('1141,422,20;1185,419,20;1110,429,13;1164,442,13;1144,1023,75;1058,1072,45;1135,1108,18;1104,1113,13;1167,1100,13', C), N);
})();
```
